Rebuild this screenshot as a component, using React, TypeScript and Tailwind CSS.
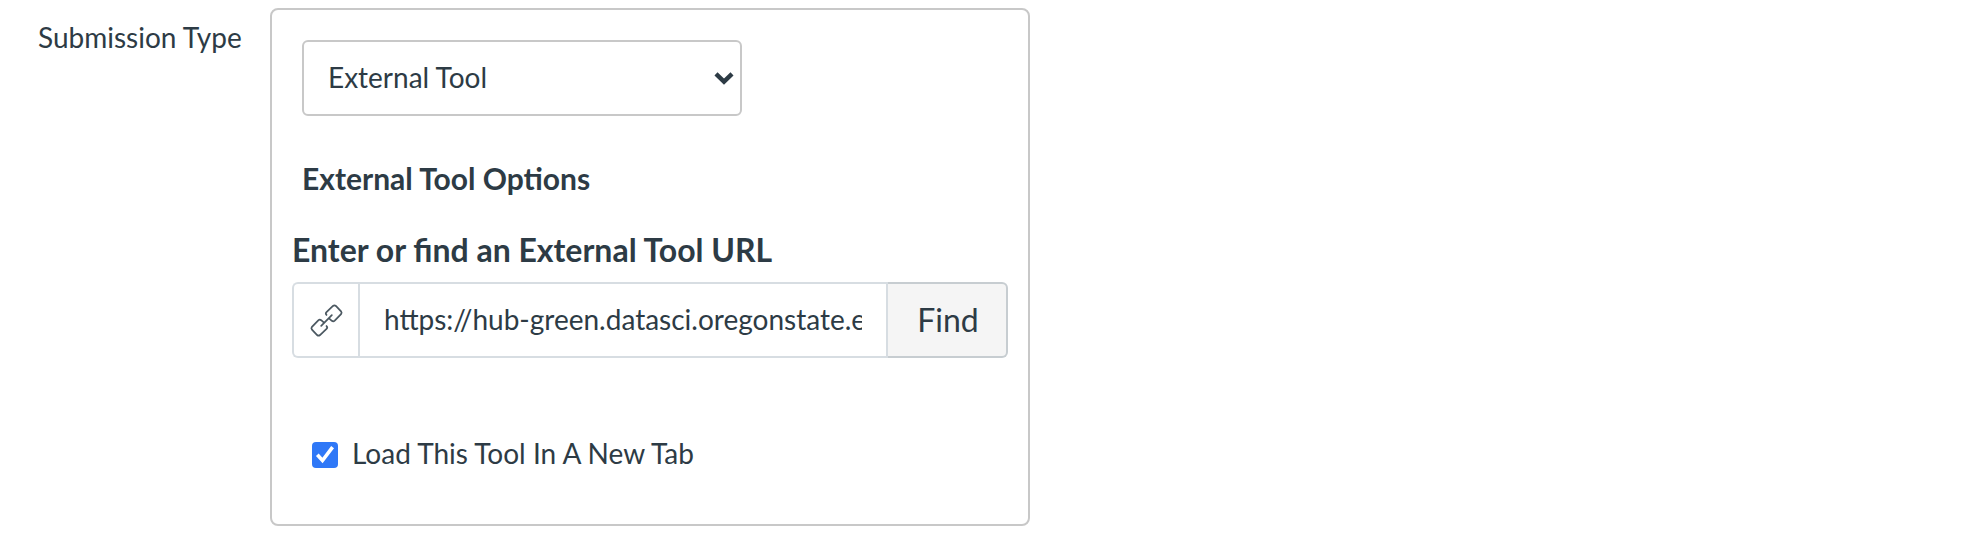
export default function App() {
  return (
    <main className="flex h-[546px] w-full items-start bg-white pt-2 font-['Lato',sans-serif] text-[28px] leading-10 text-[#2d3b45]">
      <label htmlFor="submission-type" className="w-[270px] shrink-0 pt-[9px] pl-[38px] whitespace-nowrap">
        Submission Type
      </label>

      <section className="flex h-[518px] w-[760px] shrink-0 flex-col rounded-lg border-2 border-[#c8c8c8] pt-[30px] pr-5 pl-5">
        <div className="ml-[10px] grid h-[76px] w-[440px] items-center">
          <select
            id="submission-type"
            className="col-start-1 row-start-1 h-[76px] w-full appearance-none rounded-md border-2 border-[#c8c8c8] bg-white pb-[2px] pl-6"
          >
            <option>External Tool</option>
          </select>
          <svg
            className="pointer-events-none col-start-1 row-start-1 mr-2 h-[14px] w-5 justify-self-end"
            viewBox="0 0 20 14"
            fill="none"
            stroke="#2d3b45"
            strokeWidth="4.4"
          >
            <path d="M2 2.9 10 10.6 18 2.9" />
          </svg>
        </div>

        <h2 className="mt-[42px] ml-[10px] text-[30px] font-bold">External Tool Options</h2>

        <h3 className="mt-8 text-[32px] font-bold">Enter or find an External Tool URL</h3>

        <div className="mt-3 flex h-[76px] w-[716px] shrink-0">
          <span className="flex w-[66px] items-center justify-center rounded-l-md border-2 border-r-0 border-[#d7dde2]">
            <svg
              className="h-[31px] w-[31px] overflow-visible"
              viewBox="0 0 32 32"
              fill="none"
              stroke="#4b5861"
              strokeWidth="1.8"
              strokeLinecap="round"
            >
              <path d="M16 10.300Q14.500 8.800 16 7.300L22.700 1Q24.200-.3 25.700 1L31 6.500Q32.200 8 31 9.500L24.500 16.200Q23 17.500 21.500 16.300L18.900 14" />
              <path d="M16 21.700Q17.500 23.200 16 24.700L9.300 31Q7.800 32.300 6.300 31L1 25.500Q-.2 24 1 22.500L7.500 15.800Q9 14.500 10.500 15.700L13.100 18" />
              <path d="M10.500 21.500 21.500 10.500" />
            </svg>
          </span>
          <input
            className="w-[530px] border-2 border-[#d7dde2] bg-white px-6 pb-[2px]"
            defaultValue="https://hub-green.datasci.oregonstate.edu/hub/lti/launch"
            aria-label="External Tool URL"
          />
          <button className="w-[120px] rounded-r-md border-2 border-l-0 border-[#c7cdd1] bg-[#f5f5f5] pl-[2px] text-[32px]">
            Find
          </button>
        </div>

        <label className="mt-[75px] ml-5 flex items-start gap-[14px]">
          <span className="mt-[9px] grid h-[26px] w-[26px] place-items-center rounded bg-[#2f78f7]">
            <input type="checkbox" defaultChecked className="col-start-1 row-start-1 h-[26px] w-[26px] appearance-none" />
            <svg
              className="pointer-events-none col-start-1 row-start-1 h-[26px] w-[26px]"
              viewBox="0 0 26 26"
              fill="none"
              stroke="white"
              strokeWidth="3.6"
            >
              <path d="m5.300 12.700 5.200 5.800L20.600 5.200" />
            </svg>
          </span>
          Load This Tool In A New Tab
        </label>
      </section>
    </main>
  );
}
